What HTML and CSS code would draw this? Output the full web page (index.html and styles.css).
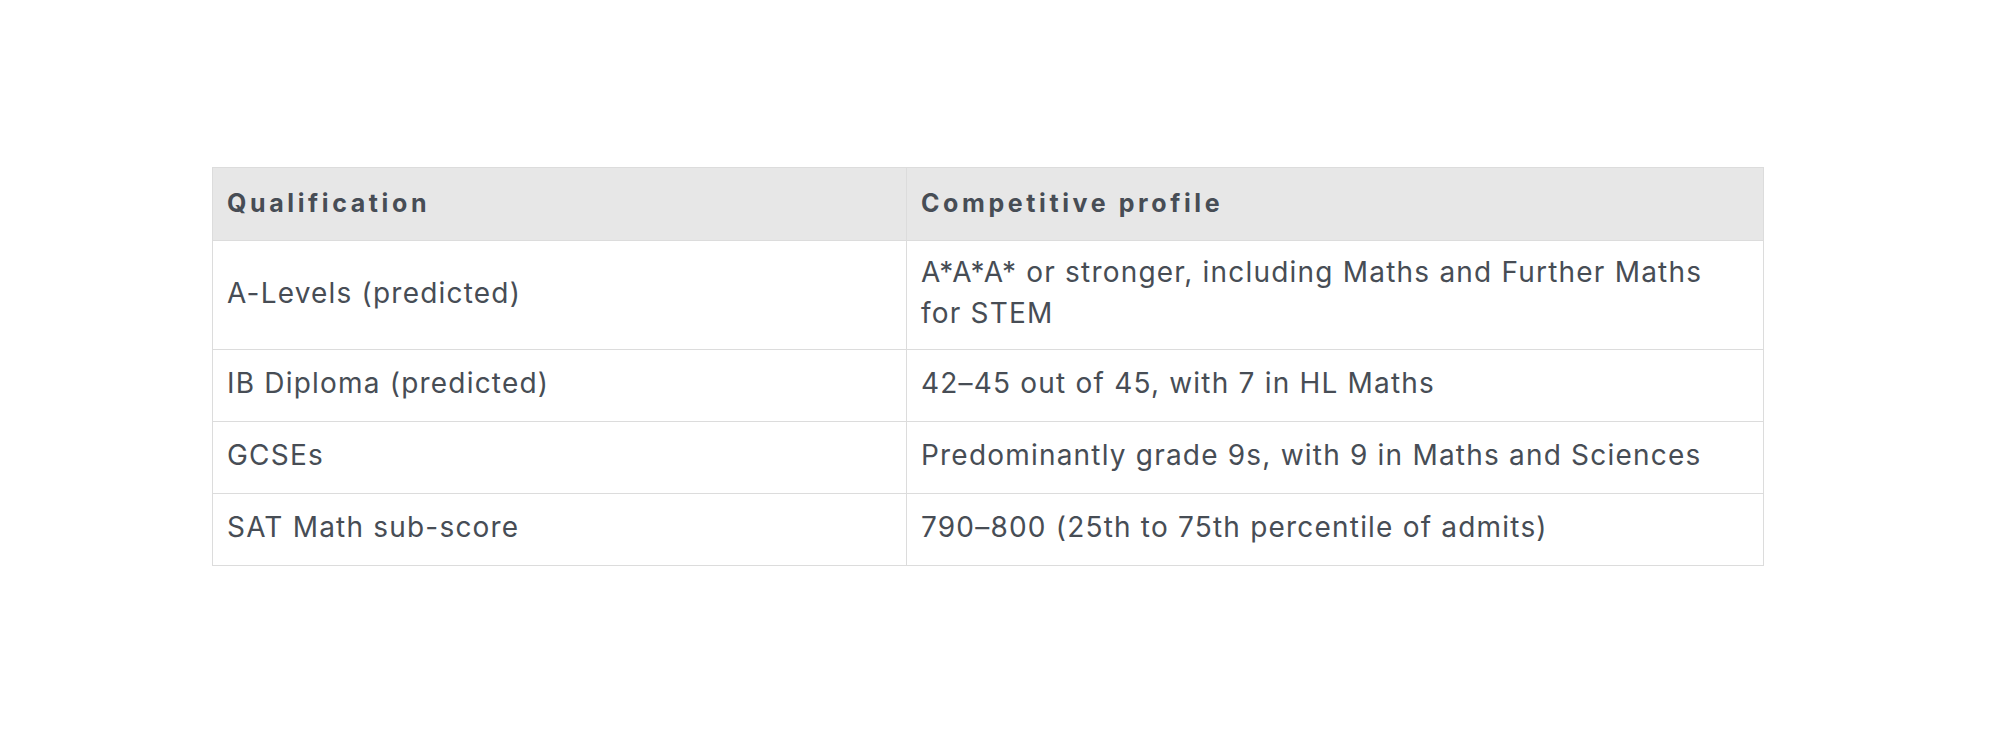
FILE: index.html
```html
<!DOCTYPE html>
<html lang="en">
<head>
<meta charset="utf-8">
<title>Qualifications</title>
<link rel="stylesheet" href="styles.css">
</head>
<body>
<main class="page">
  <table class="quals">
    <colgroup>
      <col class="col-qual">
      <col class="col-profile">
    </colgroup>
    <thead>
      <tr>
        <th>Qualification</th>
        <th>Competitive profile</th>
      </tr>
    </thead>
    <tbody>
      <tr>
        <td>A-Levels (predicted)</td>
        <td>A*A*A* or stronger, including Maths and Further Maths for STEM</td>
      </tr>
      <tr>
        <td>IB Diploma (predicted)</td>
        <td>42–45 out of 45, with 7 in HL Maths</td>
      </tr>
      <tr>
        <td>GCSEs</td>
        <td>Predominantly grade 9s, with 9 in Maths and Sciences</td>
      </tr>
      <tr>
        <td>SAT Math sub-score</td>
        <td>790–800 (25th to 75th percentile of admits)</td>
      </tr>
    </tbody>
  </table>
</main>
</body>
</html>
```

FILE: styles.css
```css
html, body {
  margin: 0;
  padding: 0;
  background: #ffffff;
}

.page {
  padding: 167px 0 0 212px;
  font-family: Inter, "Liberation Sans", sans-serif;
  color: #474d55;
}

.quals {
  width: 1551px;
  border-collapse: collapse;
  table-layout: fixed;
}

.col-qual { width: 694px; }
.col-profile { width: 857px; }

.quals th,
.quals td {
  border: 1px solid #dcdcdc;
  text-align: left;
  vertical-align: middle;
}

.quals th {
  background: #e7e7e7;
  height: 45px;
  padding: 12px 14px 15px 14px;
  font-size: 25px;
  font-weight: 700;
  letter-spacing: 3.6px;
  line-height: 32px;
  color: #474d55;
}

.quals td {
  height: 45px;
  padding: 11px 14px 15px 14px;
  font-size: 28px;
  font-weight: 400;
  line-height: 41px;
  letter-spacing: 1.2px;
}
```
